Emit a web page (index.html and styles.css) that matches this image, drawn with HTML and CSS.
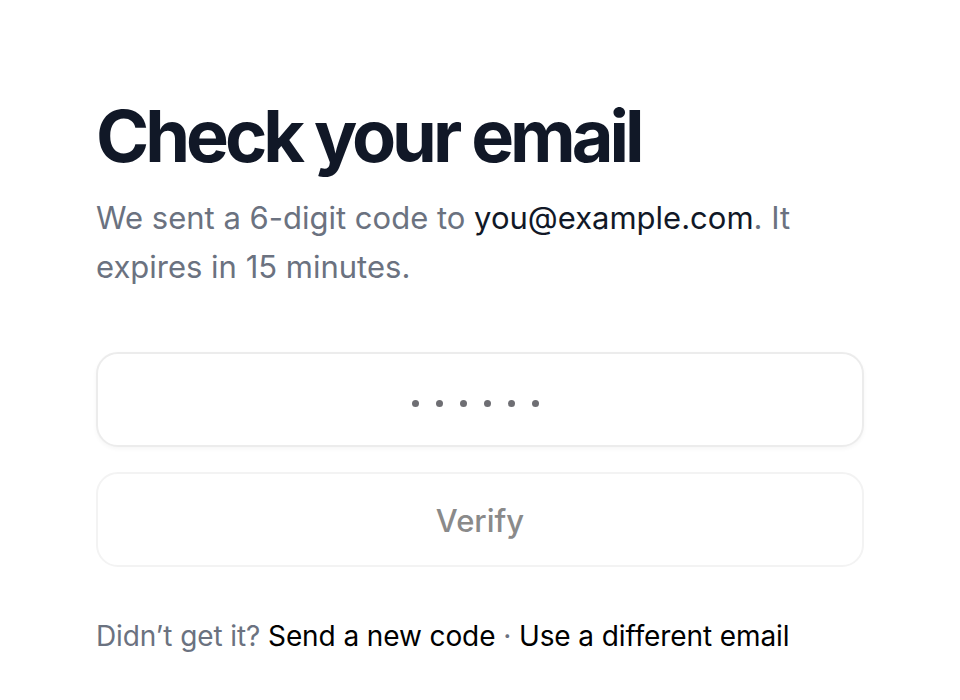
FILE: index.html
```html
<!DOCTYPE html>
<html lang="en">
<head>
<meta charset="utf-8">
<title>Check your email</title>
<link rel="stylesheet" href="styles.css">
</head>
<body>
<main class="page">
  <h1 class="title">Check your email</h1>
  <p class="lead">We sent a 6-digit code to <span class="email">you@example.com</span>. It expires in 15 minutes.</p>
  <form class="form">
    <div class="code-field" aria-label="Verification code">
      <span class="dot"></span><span class="dot"></span><span class="dot"></span><span class="dot"></span><span class="dot"></span><span class="dot"></span>
    </div>
    <button type="button" class="verify" disabled>Verify</button>
  </form>
  <p class="footer">Didn’t get it? <a class="link" href="#">Send a new code</a> <span class="sep">·</span> <a class="link" href="#">Use a different email</a></p>
</main>
</body>
</html>
```

FILE: styles.css
```css
html, body {
  margin: 0;
  padding: 0;
  background: #ffffff;
}
body {
  font-family: Inter, "Noto Sans", "Liberation Sans", sans-serif;
  color: #111827;
}
.page {
  width: 768px;
  padding: 92px 96px 0 96px;
  box-sizing: content-box;
}
.title {
  margin: 0;
  font-size: 72px;
  line-height: 88px;
  font-weight: 700;
  letter-spacing: -0.056em;
  color: #111827;
}
.lead {
  margin: 13px 0 0 0;
  font-size: 31px;
  line-height: 49px;
  color: #6b7280;
}
.email {
  color: #111827;
}
.form {
  margin-top: 61px;
  display: flex;
  flex-direction: column;
  gap: 25px;
}
.code-field {
  box-sizing: border-box;
  height: 95px;
  border: 2px solid #ececec;
  border-radius: 22px;
  box-shadow: 0 2px 4px rgba(0,0,0,0.04);
  display: flex;
  align-items: center;
  justify-content: center;
  gap: 17px;
  padding: 7px 10px 0 0;
  background: #fff;
}
.dot {
  width: 7px;
  height: 7px;
  border-radius: 50%;
  background: #6e6e73;
}
.verify {
  box-sizing: border-box;
  height: 95px;
  border: 2px solid #f3f3f3;
  border-radius: 22px;
  background: #fff;
  font-family: inherit;
  font-size: 31px;
  font-weight: 500;
  color: #8a8a8a;
  padding: 2px 0 0 0;
}
.footer {
  margin: 49px 0 0 0;
  font-size: 28px;
  letter-spacing: -0.1px;
  line-height: 40px;
  color: #6b7280;
}
.link {
  color: #000000;
  text-decoration: none;
}
.sep {
  color: #6b7280;
}
```
